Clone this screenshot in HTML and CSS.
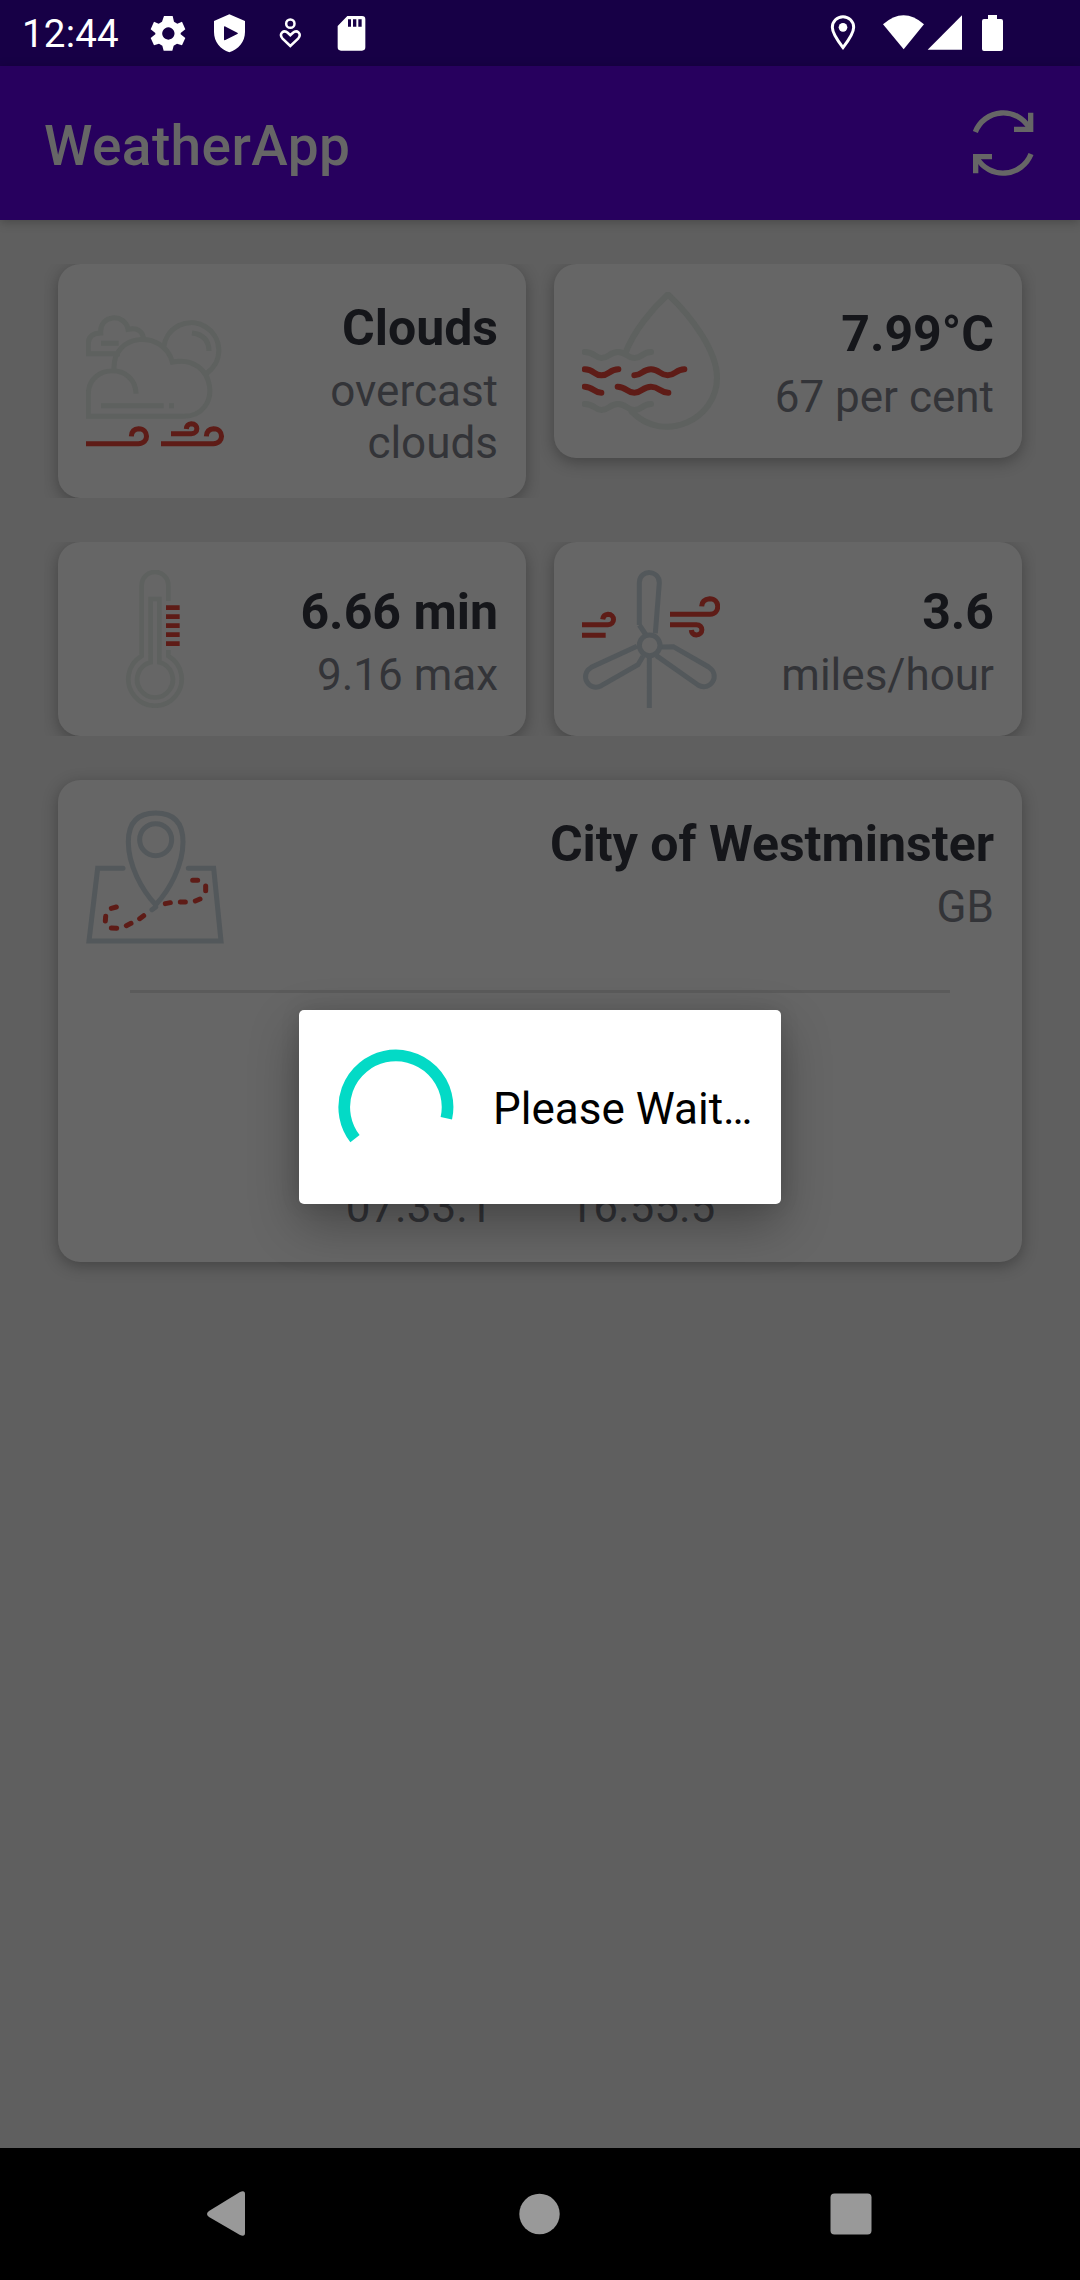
FILE: index.html
```html
<!DOCTYPE html>
<html lang="en">
<head>
<meta charset="utf-8">
<title>WeatherApp</title>
<link rel="stylesheet" href="styles.css">
</head>
<body>
<div class="screen">
  <header class="status">
    <span class="clock">12:44</span>
    <svg class="status-left" viewBox="450 36 660 126" width="220" height="42" fill="#fff">
      <path fill-rule="evenodd" d="M492 48h26l4 17 10 6 14-6 10 23-14 11v4l14 11-10 22-15-5-10 6-4 15h-26l-4-15-10-6-15 5-10-22 14-11v-4l-14-11 10-23 14 6 10-6zM505 82a18.500 18.500 0 1 0 .1 0z"/>
      <path fill-rule="evenodd" d="M688 43L735 63V96C735 126 715 148 688 157C661 148 642 126 642 96V63ZM675 79Q672 78 672 82V118Q672 122 676 120L712 102Q716 100 712 98L677 80Z"/>
      <g fill="none" stroke="#fff" stroke-width="7.500"><circle cx="871" cy="71" r="12.500"/><path d="M871 138L847 115C836 101 851 87 864 99L871 106L878 99C891 87 906 101 895 115Z"/></g>
      <path fill-rule="evenodd" d="M1042 48H1086Q1096 48 1096 58V142Q1096 152 1086 152H1023Q1013 152 1013 142V78ZM1044 58V80H1053V58ZM1059 58V80H1069V58ZM1075 58V80H1085V58Z"/>
    </svg>
    <svg class="status-right" viewBox="150 36 522 126" width="174" height="42" fill="#fff">
      <path d="M189 143C172 121 157 99 157 82A32 32 0 0 1 221 82C221 99 206 121 189 143Z" fill="none" stroke="#fff" stroke-width="9"/><circle cx="189" cy="82" r="13"/>
      <path d="M309 73Q371 19 432 73L371 148Z"/><path d="M546 46V149H443Z"/>
      <path d="M624 45H651V57H663Q669 57 669 63V147Q669 153 663 153H612Q606 153 606 147V63Q606 57 612 57H624Z"/>
    </svg>
  </header>
  <div class="appbar">
    <h1>WeatherApp</h1>
    <svg viewBox="576 327 189 204" width="63" height="68" fill="none" stroke="#666" stroke-width="16"><path d="M586 396A90 90 0 0 1 748 384"/><path d="M752 338V388H702"/><path d="M753 462A90 90 0 0 1 591 474"/><path d="M587 520V470H636"/></svg>
  </div>
  <main class="content">
    <div class="grid">
      <section class="card clip">
        <svg class="icon pale" viewBox="138 186 414 414">
          <path d="M240 311H145V280Q146 250 182 249C178 192 256 189 264 238Q308 229 312 272M183 280H236M371 292A83 83 0 1 1 500 370M456 249Q506 255 507 303M222 357C218 248 370 238 397 336C530 310 550 499 430 499H145V430C147 341 286 339 288 431M183 467H371M387 467H402"/>
          <path class="red" d="M138 581H295C329 581 326 536 296 536Q275 537 274 559M363 581H520C554 581 551 536 521 536Q500 537 499 559M393 551H454C476 551 476 521 454 521Q440 522 439 537"/>
        </svg>
        <div class="text"><h2>Clouds</h2><p>overcast<br>clouds</p></div>
      </section>
      <section class="card clip-top">
        <svg class="icon pale wide" viewBox="126 126 414 414">
          <path d="M258 305C282 243 335 178 384 133C455 200 531 303 531 383C531 510 370 583 275 485M134 306C164 306 164 324 184 324C208 324 208 306 234 306C260 306 260 324 284 324C306 324 306 306 333 306M134 462C164 462 164 480 184 480C208 480 208 462 234 462C260 462 260 480 284 480C306 480 306 462 333 462"/>
          <path class="red" d="M134 358C164 358 160 376 184 376C208 376 208 358 235 358M283 376C307 376 307 358 333 358C359 358 359 376 383 376C407 376 407 358 433 358M134 410C160 410 160 428 184 428M233 410C259 410 259 428 283 428C307 428 307 410 333 410C359 410 359 428 385 428"/>
        </svg>
        <div class="text"><h2>7.99°C</h2><p>67 per cent</p></div>
      </section>
      <section class="card clip">
        <svg class="icon pale thin" viewBox="138 120 414 414">
          <path d="M385 213V166A40 40 0 0 0 305 166V378A80 80 0 1 0 385 378V360M332 397V207H358V397A53.500 53.500 0 1 1 332 397Z"/>
          <path class="red" d="M378 233H419M378 260H419M378 287H419M378 314H419M378 341H419"/>
        </svg>
        <div class="text"><h2>6.66 min</h2><p>9.16 max</p></div>
      </section>
      <section class="card clip">
        <svg class="icon slate" viewBox="126 120 414 414">
          <path d="M298 285V157C300 117 358 119 358 158L346 310M298 285L318 315M291 349L154 412C117 433 145 487 184 467L294 404L309 379M366 351L400 350L506 411C544 436 510 486 474 465L349 377M328 382V534"/><circle cx="329" cy="346" r="31"/>
          <path class="red" d="M126 284H204C226 284 226 253 204 253Q190 254 188 268M126 316H197M390 253H510C542 251 540 206 509 206Q486 208 485 229M390 284H469C491 284 491 315 469 315Q455 314 454 300"/>
        </svg>
        <div class="text"><h2>3.6</h2><p>miles/hour</p></div>
      </section>
    </div>
    <section class="card city">
      <div class="row">
        <svg class="icon slate" viewBox="138 114 414 414">
          <path stroke-linecap="round" d="M249 295H173L147 513H543L521 295H445M347 404C306 361 265 286 265 216C265 156 295 129 347 129C399 129 429 156 429 216C429 286 388 361 347 404ZM336 419L347 411"/><circle cx="347" cy="209" r="48"/>
          <path class="red" stroke-linecap="round" d="M214 415L229 411M197 439L196 453M214 474L230 475M259 467L273 460M299 446L311 437M376 401L391 398M421 396H436M466 393L480 387M497 362V348M473 331H458"/>
        </svg>
        <div class="text"><h2>City of Westminster</h2><p>GB</p></div>
      </div>
      <hr>
      <div class="times"><p>07.33.1</p><p>16.55.5</p></div>
    </section>
  </main>
  <nav class="nav">
    <svg viewBox="0 0 46 46"><path d="M6 20L37 1Q42-1 42 3V42Q42 46 37 44L6 26Q2 23 6 20Z"/></svg>
    <svg viewBox="0 0 46 46"><circle cx="23.500" cy="23" r="20.200"/></svg>
    <svg viewBox="0 0 46 46"><rect x="2.500" y="2.500" width="41" height="41" rx="4"/></svg>
  </nav>
  <div class="dialog">
    <svg viewBox="173 174 351 351" width="117" height="117" fill="none" stroke="#03dac6" stroke-width="35"><path d="M227 449A155 155 0 1 1 501 388"/></svg>
    <span>Please Wait…</span>
  </div>
</div>
</body>
</html>
```
FILE: styles.css
```css
* { box-sizing: border-box; }
body { margin: 0; font-family: Roboto, sans-serif; }
h1, h2, p { margin: 0; }
svg { display: block; flex: none; }

.screen { position: relative; width: 1080px; height: 2280px; display: flex; flex-direction: column; background: #5f5f5f; overflow: hidden; }

.status { height: 66px; background: #170046; display: flex; align-items: center; padding: 0 76px 0 22px; color: #fff; }
.clock { font-size: 38.5px; line-height: 66px; width: 128px; padding-top: 1px; letter-spacing: .2px; }
.status-right { margin-left: auto; }

.appbar { position: relative; z-index: 1; height: 154px; background: #27005e; display: flex; align-items: center; justify-content: space-between; padding: 0 45px 0 44px; box-shadow: 0 2px 10px rgba(0, 0, 0, .25); }
.appbar h1 { font-size: 55px; line-height: 64px; font-weight: 500; letter-spacing: .4px; color: #666; padding-top: 5px; }

.content { flex: 1; padding: 44px 58px; display: flex; flex-direction: column; gap: 44px; }
.grid { display: grid; grid-template-columns: 468px 468px; gap: 44px 28px; align-items: start; }
.card { background: #666; border-radius: 22px; padding: 28px; display: flex; align-items: center; justify-content: space-between; box-shadow: 0 4px 16px rgba(0, 0, 0, .3); }
.grid .card { min-height: 194px; }
.grid .card:first-child { height: 234px; }
.clip { clip-path: inset(0 -14px); }
.clip-top { clip-path: inset(0 -14px -30px -14px); }

.icon { width: 138px; height: 138px; fill: none; stroke-width: 15; }
.wide { stroke-width: 18; stroke-linecap: round; }
.thin { stroke-width: 14; }
.pale { stroke: #5e615f; }
.slate { stroke: #53585b; }
.icon .red { stroke: #5e1c17; }

.text { display: flex; flex-direction: column; gap: 4px; padding-top: 2px; text-align: right; margin: -10px 0; }
.text h2 { font-size: 50px; line-height: 66px; font-weight: 700; color: #15161a; }
p { font-size: 44px; line-height: 52px; color: #333438; }

.city { height: 482px; flex-direction: column; align-items: stretch; justify-content: flex-start; }
.row { display: flex; justify-content: space-between; align-items: flex-start; }
.row .text { margin: 0; padding-top: 3px; }
hr { width: 820px; height: 3px; margin: 44px auto 0; border: 0; background: #5b5b5b; }
.times { display: flex; justify-content: center; gap: 76px; margin-top: 188px; padding-right: 19px; }

.nav { height: 132px; background: #000; display: flex; align-items: center; justify-content: space-between; padding: 0 206px 0 203px; }
.nav svg { width: 46px; height: 46px; fill: #999; }

.dialog { position: absolute; z-index: 2; left: 299px; top: 1010px; width: 482px; height: 194px; padding: 0 28px 0 38px; background: #fff; border-radius: 5px; display: flex; align-items: center; box-shadow: 0 20px 50px rgba(0, 0, 0, .3), 0 0 20px rgba(0, 0, 0, .1); }
.dialog svg { margin-bottom: 4px; }
.dialog span { font-size: 44px; line-height: 52px; margin-left: 39px; padding-top: 3px; color: #000; white-space: nowrap; }
```
